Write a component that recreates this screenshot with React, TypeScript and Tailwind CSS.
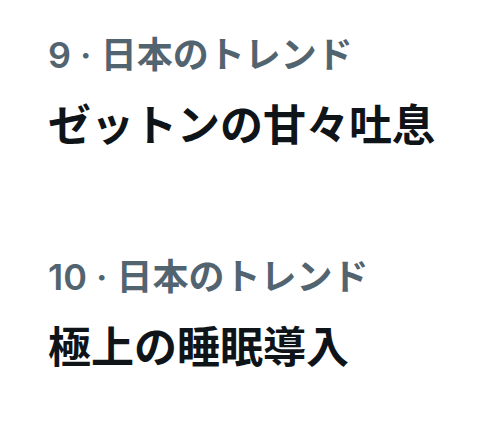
const trends = [
  { rank: 9, category: '日本のトレンド', title: 'ゼットンの甘々吐息' },
  { rank: 10, category: '日本のトレンド', title: '極上の睡眠導入' },
]

export default function App() {
  return (
    <div
      className="w-[501px] h-[423px] bg-white overflow-hidden pl-[48px] pt-[33px]"
      style={{ fontFamily: 'Inter, "Noto Sans CJK JP", sans-serif' }}
    >
      {trends.map((t, i) => (
        <div key={t.rank} className={i > 0 ? 'mt-[104px]' : ''}>
          <div className="text-[36px] leading-[44px] font-semibold text-[#536471] whitespace-nowrap">
            {t.rank} · {t.category}
          </div>
          <div className="mt-[22px] text-[43px] leading-[52px] font-bold text-[#0f1419] whitespace-nowrap">
            {t.title}
          </div>
        </div>
      ))}
    </div>
  )
}
